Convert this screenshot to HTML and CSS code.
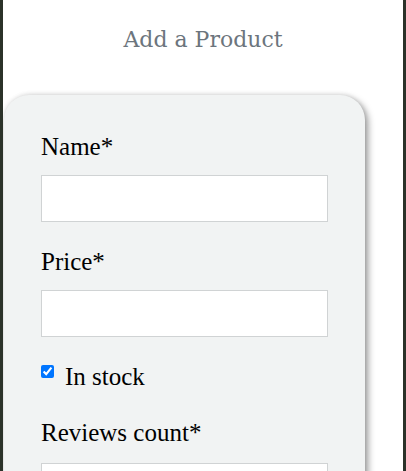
FILE: index.html
```html
<!DOCTYPE html>
<html lang="en">
<head>
<meta charset="utf-8">
<title>Add a Product</title>
<link rel="stylesheet" href="styles.css">
</head>
<body>
<div class="page">
  <h1 class="title">Add a Product</h1>
  <form class="card">
    <div class="field">
      <label class="label" for="name">Name*</label>
      <input class="input" id="name" type="text">
    </div>
    <div class="field">
      <label class="label" for="price">Price*</label>
      <input class="input" id="price" type="text">
    </div>
    <label class="check">
      <input class="checkbox" type="checkbox" checked>
      <span>In stock</span>
    </label>
    <div class="field">
      <label class="label label-tight" for="reviews">Reviews count*</label>
      <input class="input" id="reviews" type="text">
    </div>
  </form>
</div>
</body>
</html>
```

FILE: styles.css
```css
html, body {
  margin: 0;
  padding: 0;
  background: #2b3229;
}

.page {
  margin: 0 3px;
  background: #ffffff;
  min-height: 100vh;
  padding-top: 25px;
  overflow: hidden;
  box-sizing: border-box;
}

.title {
  margin: 0 0 40px;
  font-family: "DejaVu Serif", "Liberation Serif", serif;
  font-weight: normal;
  font-size: 22px;
  line-height: 30px;
  color: #6c757d;
  text-align: center;
}

.card {
  margin-left: 1px;
  width: 361px;
  box-sizing: border-box;
  padding: 38px 37px 40px;
  background: #f1f3f3;
  border-radius: 25px;
  box-shadow: 3px 3px 7px rgba(0, 0, 0, 0.4), 0 -1px 4px rgba(0, 0, 0, 0.08);
  font-family: "Liberation Serif", "Times New Roman", serif;
  font-size: 25px;
  line-height: 28px;
  color: #000;
}

.field {
  display: flex;
  flex-direction: column;
  margin-bottom: 26px;
}

.label {
  display: block;
  margin-bottom: 14px;
}

.label-tight {
  margin-bottom: 16px;
}

.input {
  width: 287px;
  height: 47px;
  box-sizing: border-box;
  margin: 0;
  border: 1px solid #d0d3d4;
  border-radius: 0;
  background: #ffffff;
  font-size: 16px;
}

.check {
  display: flex;
  align-items: flex-start;
  margin-bottom: 28px;
}

.checkbox {
  width: 13px;
  height: 13px;
  margin: 2px 11px 0 0;
}
```
